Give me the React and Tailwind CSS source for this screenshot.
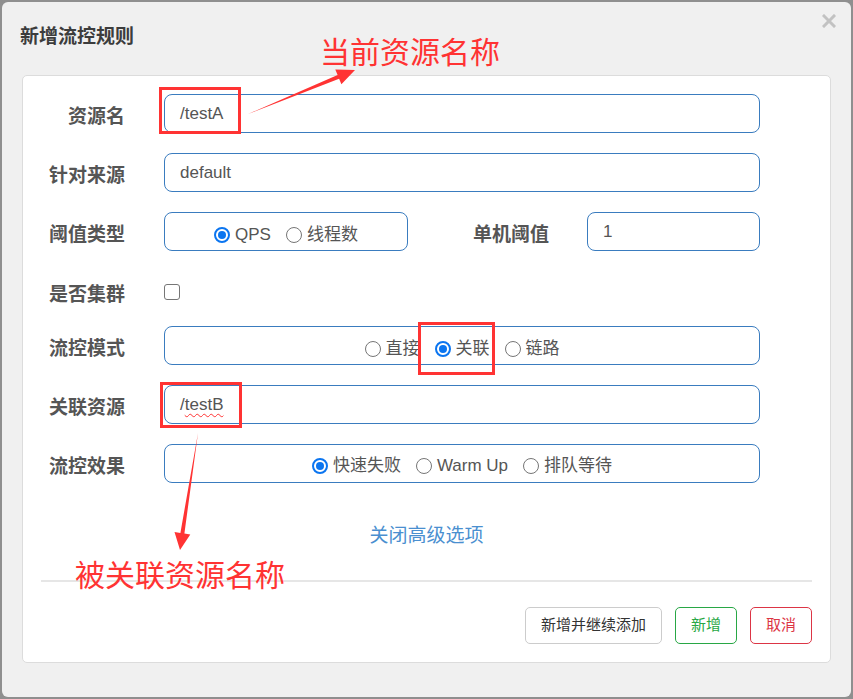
import React from "react";

const FONT = { fontFamily: '"Liberation Sans", "Noto Sans CJK SC", sans-serif' };

function Radio({ checked, label }) {
  return (
    <div className="flex items-center gap-[5px]">
      {checked ? (
        <span className="w-[16px] h-[16px] rounded-full border-2 border-[#0b75f0] bg-white flex items-center justify-center">
          <span className="w-[8px] h-[8px] rounded-full bg-[#0b75f0]" />
        </span>
      ) : (
        <span className="w-[16px] h-[16px] rounded-full border border-[#767676] bg-white" />
      )}
      <span className="text-[17px] text-[#555] leading-none">{label}</span>
    </div>
  );
}

function Label({ children, w = "w-[102px]" }) {
  return (
    <div className={`${w} shrink-0 pt-[5px] text-right text-[19px] font-bold text-[#555] leading-none`}>{children}</div>
  );
}

function Field({ children, w = "w-[596px]" }) {
  return (
    <div className={`${w} h-[39px] border border-[#3a7cbf] rounded-[8px] bg-white flex items-center pl-[15px] text-[17px] text-[#555]`}>
      {children}
    </div>
  );
}

function RadioBox({ items, w = "w-[596px]", pt = "pt-[5px]" }) {
  return (
    <div className={`${w} ${pt} h-[39px] border border-[#3a7cbf] rounded-[8px] bg-white flex items-center justify-center gap-[15px]`}>
      {items.map((it) => (
        <Radio key={it.label} checked={it.checked} label={it.label} />
      ))}
    </div>
  );
}

export default function App() {
  return (
    <div className="relative w-[853px] h-[699px] bg-[#8f8f8f] p-[2px]" style={FONT}>
      <div className="h-full rounded-[6px] bg-[#f0f0f0] flex flex-col">
        <div className="relative h-[73px] px-[18px] pt-[24px]">
          <div className="text-[19px] leading-[22px] font-bold text-[#3c3c3c]">新增流控规则</div>
          <svg className="absolute right-[15px] top-[12px]" width="14" height="14" viewBox="0 0 14 14">
            <path d="M2 2 L12 12 M12 2 L2 12" stroke="#c2c2c2" strokeWidth="3" strokeLinecap="square" />
          </svg>
        </div>
        <div className="mx-[20px] rounded-[5px] border border-[#dcdcdc] bg-white pt-[18px] pb-[18px] flex flex-col">
          <div className="flex flex-col gap-[20px]">
            <div className="flex items-center">
              <Label>资源名</Label>
              <div className="ml-[39px]"><Field>/testA</Field></div>
            </div>
            <div className="flex items-center">
              <Label>针对来源</Label>
              <div className="ml-[39px]"><Field>default</Field></div>
            </div>
            <div className="flex items-center">
              <Label>阈值类型</Label>
              <div className="ml-[39px]">
                <RadioBox w="w-[244px]" pt="pt-[6px]" items={[{ label: "QPS", checked: true }, { label: "线程数" }]} />
              </div>
              <Label w="w-[141px]">单机阈值</Label>
              <div className="ml-[38px]"><Field w="w-[173px]">1</Field></div>
            </div>
            <div className="flex items-center h-[35px] pt-[7px]">
              <Label>是否集群</Label>
              <span className="ml-[39px] w-[16px] h-[16px] rounded-[3px] border border-[#767676] bg-white" />
            </div>
            <div className="flex items-center">
              <Label>流控模式</Label>
              <div className="ml-[39px]">
                <RadioBox pt="pt-[6px]" items={[{ label: "直接" }, { label: "关联", checked: true }, { label: "链路" }]} />
              </div>
            </div>
            <div className="flex items-center">
              <Label>关联资源</Label>
              <div className="ml-[39px]">
                <Field>
                  /<span className="underline decoration-wavy decoration-[#ff3333] decoration-1 underline-offset-[3px]">testB</span>
                </Field>
              </div>
            </div>
            <div className="flex items-center">
              <Label>流控效果</Label>
              <div className="ml-[39px]">
                <RadioBox pt="pt-[4px]" items={[{ label: "快速失败", checked: true }, { label: "Warm Up" }, { label: "排队等待" }]} />
              </div>
            </div>
          </div>
          <div className="mt-[41px] h-[24px] leading-[24px] text-center text-[19px] text-[#4a8fd0]">关闭高级选项</div>
          <div className="mt-[32px] mx-[18px] h-[2px] bg-[#e6e6e6]" />
          <div className="mt-[25px] mr-[18px] flex justify-end gap-[13px]">
            <button className="w-[137px] h-[37px] rounded-[5px] border border-[#cccccc] bg-white text-[15px] text-[#333]">新增并继续添加</button>
            <button className="w-[62px] h-[37px] rounded-[5px] border border-[#28a745] bg-white text-[15px] text-[#28a745]">新增</button>
            <button className="w-[62px] h-[37px] rounded-[5px] border border-[#dc3545] bg-white text-[15px] text-[#dc3545]">取消</button>
          </div>
        </div>
      </div>

      {/* annotations */}
      <div className="absolute left-[159px] top-[87px] w-[82px] h-[47px] border-[3px] border-[#ff3333]" />
      <div className="absolute left-[418px] top-[322px] w-[77px] h-[53px] border-[3px] border-[#ff3333]" />
      <div className="absolute left-[160px] top-[382px] w-[82px] h-[46px] border-[3px] border-[#ff3333]" />
      <svg className="absolute left-0 top-0 pointer-events-none" width="853" height="699">
        <polygon fill="#ff3333" points="248,114 337.6,75 335.3,69.4 355,70 341.4,84.2 339.1,78.7" />
        <polygon fill="#ff3333" points="198,433 184.4,533.5 190.3,534.4 180,550 174.5,532 180.4,532.9" />
      </svg>
      <div className="absolute left-[320px] top-[38px] text-[30px] leading-[30px] text-[#ff3333]">当前资源名称</div>
      <div className="absolute left-[75px] top-[561px] text-[30px] leading-[30px] text-[#ff3333]">被关联资源名称</div>
    </div>
  );
}
